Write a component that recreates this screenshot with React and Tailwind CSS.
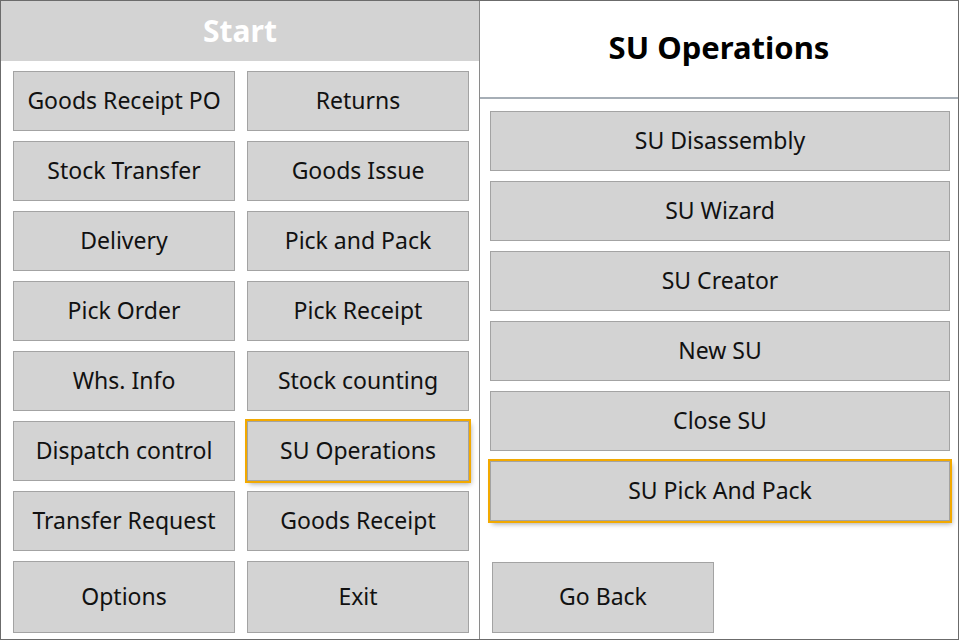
const leftItems = [
  'Goods Receipt PO', 'Returns',
  'Stock Transfer', 'Goods Issue',
  'Delivery', 'Pick and Pack',
  'Pick Order', 'Pick Receipt',
  'Whs. Info', 'Stock counting',
  'Dispatch control', 'SU Operations',
  'Transfer Request', 'Goods Receipt',
];

const rightItems = ['SU Disassembly', 'SU Wizard', 'SU Creator', 'New SU', 'Close SU', 'SU Pick And Pack'];

function Btn({ label, active, className = 'h-[60px]' }) {
  return (
    <button
      className={
        'flex items-center justify-center pb-[2px] bg-[#d3d3d3] border border-[#a3a3a3] text-[23px] text-[#111] ' +
        className +
        (active ? ' outline-2 outline-[#f2a900] shadow-[2px_3px_5px_rgba(0,0,0,0.35)]' : '')
      }
    >
      {label}
    </button>
  );
}

export default function App() {
  return (
    <div
      className="w-[959px] h-[640px] flex border border-[#6b6b6b] bg-white"
      style={{ fontFamily: '"Noto Sans", "Open Sans", sans-serif' }}
    >
      {/* Left: Start menu */}
      <div className="w-[479px] border-r border-[#8a8a8a] flex flex-col">
        <div className="h-[60px] pb-[2px] bg-[#d3d3d3] flex items-center justify-center text-white font-bold text-[30px]">
          Start
        </div>
        <div className="grid grid-cols-[222px_222px] gap-x-[12px] gap-y-[10px] pl-[12px] pt-[10px]">
          {leftItems.map((l) => (
            <Btn key={l} label={l} active={l === 'SU Operations'} />
          ))}
          <Btn label="Options" className="h-[72px]" />
          <Btn label="Exit" className="h-[72px]" />
        </div>
      </div>

      {/* Right: SU Operations */}
      <div className="flex-1 flex flex-col">
        <div className="h-[98px] pb-[4px] border-b-2 border-[#a6aeb6] flex items-center justify-center font-bold text-[31px] text-black">
          SU Operations
        </div>
        <div className="flex flex-col gap-[10px] pl-[10px] pr-[8px] pt-[12px]">
          {rightItems.map((l) => (
            <Btn key={l} label={l} active={l === 'SU Pick And Pack'} />
          ))}
        </div>
        <div className="pl-[12px] pt-[41px]">
          <Btn label="Go Back" className="w-[222px] h-[71px]" />
        </div>
      </div>
    </div>
  );
}
